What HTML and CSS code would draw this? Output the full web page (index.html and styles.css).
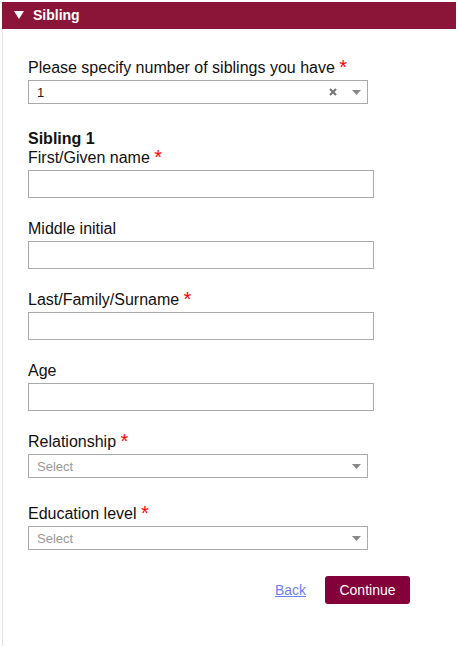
FILE: index.html
```html
<!DOCTYPE html>
<html>
<head>
<meta charset="utf-8">
<link rel="stylesheet" href="styles.css">
</head>
<body>
<div class="panel">
  <div class="panel-head">
    <svg class="caret" width="10" height="8" viewBox="0 0 10 8"><polygon points="0,0 10,0 5,8" fill="#fff"/></svg>
    <span class="panel-title">Sibling</span>
  </div>
  <div class="panel-body">
    <div class="field field-count">
      <label class="label">Please specify number of siblings you have <span class="req">*</span></label>
      <div class="select">
        <span class="select-value">1</span>
        <span class="select-clear">
          <svg width="8" height="8" viewBox="0 0 8 8"><path d="M1 1 L7 7 M7 1 L1 7" stroke="#777" stroke-width="2.2"/></svg>
        </span>
        <span class="select-arrow"><svg width="9" height="5" viewBox="0 0 9 5"><polygon points="0,0 9,0 4.5,5" fill="#888"/></svg></span>
      </div>
    </div>

    <div class="sib-title">Sibling 1</div>
    <div class="field">
      <label class="label">First/Given name <span class="req">*</span></label>
      <div class="input"></div>
    </div>
    <div class="field">
      <label class="label">Middle initial</label>
      <div class="input"></div>
    </div>
    <div class="field">
      <label class="label">Last/Family/Surname <span class="req">*</span></label>
      <div class="input"></div>
    </div>
    <div class="field">
      <label class="label">Age</label>
      <div class="input"></div>
    </div>
    <div class="field field-select">
      <label class="label">Relationship <span class="req">*</span></label>
      <div class="select">
        <span class="select-placeholder">Select</span>
        <span class="select-arrow"><svg width="9" height="5" viewBox="0 0 9 5"><polygon points="0,0 9,0 4.5,5" fill="#888"/></svg></span>
      </div>
    </div>
    <div class="field field-select">
      <label class="label">Education level <span class="req">*</span></label>
      <div class="select">
        <span class="select-placeholder">Select</span>
        <span class="select-arrow"><svg width="9" height="5" viewBox="0 0 9 5"><polygon points="0,0 9,0 4.5,5" fill="#888"/></svg></span>
      </div>
    </div>

    <div class="actions">
      <a class="back" href="#">Back</a>
      <button class="continue">Continue</button>
    </div>
  </div>
</div>
</body>
</html>
```
FILE: styles.css
```css
html, body {
  margin: 0;
  padding: 0;
  background: #fff;
}
body {
  font-family: "Liberation Sans", Arial, sans-serif;
  color: #111;
}
.panel {
  margin: 2px 2px 0 2px;
}
.panel-head {
  height: 27px;
  background: #8b1538;
  display: flex;
  align-items: center;
  padding-left: 12px;
  padding-bottom: 1px;
  box-sizing: border-box;
}
.caret {
  margin-right: 9px;
}
.panel-title {
  color: #fff;
  font-weight: bold;
  font-size: 14px;
}
.panel-body {
  border-left: 1px solid #e3e3e3;
  height: 617px;
  padding: 29px 0 0 25px;
  box-sizing: border-box;
}
.field {
  display: flex;
  flex-direction: column;
  margin-bottom: 21px;
}
.field-count {
  margin-bottom: 26px;
}
.field-select {
  margin-bottom: 26px;
}
.label {
  font-size: 16px;
  line-height: 18px;
  padding-top: 1px;
  margin-bottom: 3px;
}
.req {
  color: #f00;
  font-size: 20px;
  line-height: 10px;
  vertical-align: -1px;
}
.sib-title {
  font-size: 16px;
  font-weight: bold;
  line-height: 18px;
}
.input {
  width: 346px;
  height: 28px;
  border: 1px solid #aaa;
  box-sizing: border-box;
}
.select {
  width: 340px;
  height: 24px;
  border: 1px solid #aaa;
  box-sizing: border-box;
  display: flex;
  align-items: center;
  padding-left: 8px;
  font-size: 13px;
}
.select-value {
  flex: 1;
  color: #222;
}
.select-placeholder {
  flex: 1;
  color: #999;
}
.select-clear {
  display: flex;
  margin-right: 15px;
}
.select-arrow {
  display: flex;
  margin-right: 6px;
}
.actions {
  display: flex;
  align-items: center;
  justify-content: flex-end;
  width: 382px;
  margin-top: 1px;
}
.back {
  color: #6f7ff5;
  font-size: 14px;
  text-decoration: underline;
  margin-right: 19px;
}
.continue {
  background: #84003a;
  color: #fff;
  border: none;
  border-radius: 3px;
  font-family: "Liberation Sans", Arial, sans-serif;
  font-size: 14px;
  width: 85px;
  height: 28px;
  padding: 0;
}
```
